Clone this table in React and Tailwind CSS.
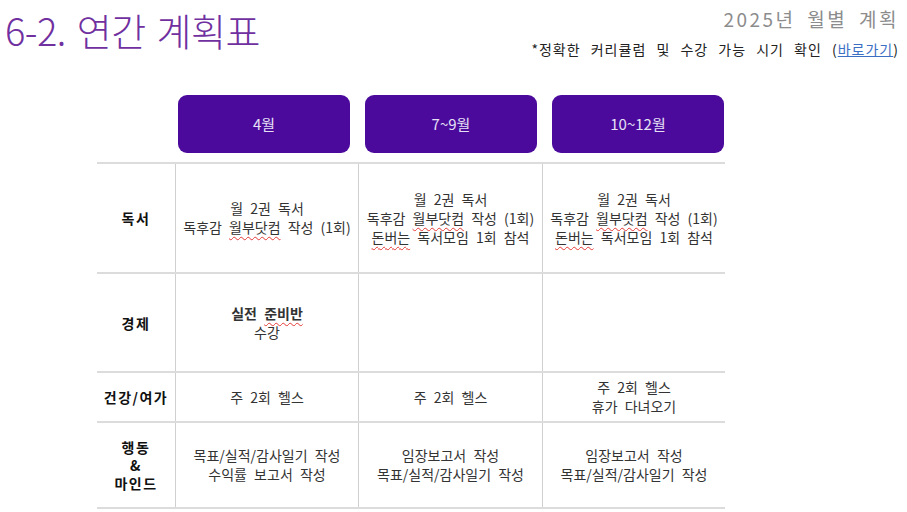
import React from "react";

const KR = { fontFamily: '"Noto Sans CJK KR", "Noto Sans", sans-serif' };

function Typo({ children }) {
  // red spell-check squiggle under a word, like in the source document
  return <span className="underline decoration-wavy decoration-[#e53935] decoration-1 underline-offset-[3px]">{children}</span>;
}

const rows = [
  {
    label: ["독서"],
    h: "h-[110px]",
    cells: [
      [<>월 2권 독서</>, <>독후감 <Typo>월부닷컴</Typo> 작성 (1회)</>],
      [<>월 2권 독서</>, <>독후감 <Typo>월부닷컴</Typo> 작성 (1회)</>, <><Typo>돈버는</Typo> 독서모임 1회 참석</>],
      [<>월 2권 독서</>, <>독후감 <Typo>월부닷컴</Typo> 작성 (1회)</>, <><Typo>돈버는</Typo> 독서모임 1회 참석</>],
    ],
  },
  {
    label: ["경제"],
    h: "h-[99px]",
    cells: [[<span className="font-bold">실전 <Typo>준비반</Typo></span>, <>수강</>], [], []],
  },
  {
    label: ["건강/여가"],
    h: "h-[50px]",
    cells: [[<>주 2회 헬스</>], [<>주 2회 헬스</>], [<>주 2회 헬스</>, <>휴가 다녀오기</>]],
  },
  {
    label: ["행동", "&", "마인드"],
    h: "h-[86px]",
    cells: [
      [<>목표/실적/감사일기 작성</>, <>수익률 보고서 작성</>],
      [<>임장보고서 작성</>, <>목표/실적/감사일기 작성</>],
      [<>임장보고서 작성</>, <>목표/실적/감사일기 작성</>],
    ],
  },
];

export default function App() {
  return (
    <div className="w-[907px] h-[512px] bg-white overflow-hidden" style={KR}>
      {/* Header */}
      <div className="flex justify-between items-start">
        <h1 className="pl-[5px] pt-[6px] text-[38px] leading-[48px] font-light text-[#7030a0] tracking-[-0.5px] [word-spacing:3px]">
          6-2. 연간 계획표
        </h1>
        <div className="pr-[8px] pt-[6px] text-right">
          <div className="text-[19px] leading-[26px] text-[#8c8c8c] tracking-[2.5px] [word-spacing:5px]">2025년 월별 계획</div>
          <div className="mt-[8px] text-[14px] leading-[18px] text-[#222] tracking-[1px] [word-spacing:6px]">
            *정확한 커리큘럼 및 수강 가능 시기 확인 (<span className="text-[#3b6fc4] underline">바로가기</span>)
          </div>
        </div>
      </div>

      {/* Month pills */}
      <div className="flex gap-[15px] pl-[178px] mt-[37px]">
        {["4월", "7~9월", "10~12월"].map((m) => (
          <div key={m} className="w-[172px] h-[58px] rounded-[9px] bg-[#4b0a9c] flex items-center justify-center text-[15px] text-[#e6e0f5]">
            {m}
          </div>
        ))}
      </div>

      {/* Table */}
      <div className="ml-[97px] mt-[9px] w-[628px] border-t-2 border-[#dcdcdc]">
        {rows.map((r, i) => (
          <div key={i} className={`grid grid-cols-[78px_183px_184px_183px] border-b-2 border-[#dcdcdc] ${r.h}`}>
            <div className="flex flex-col items-center justify-center text-[14px] leading-[18px] font-bold text-[#111] tracking-[1.5px]">
              {r.label.map((l) => (
                <span key={l}>{l}</span>
              ))}
            </div>
            {r.cells.map((c, j) => (
              <div key={j} className="border-l border-[#d0d0d0] flex flex-col items-center justify-center text-[14px] leading-[19px] text-[#333] text-center [word-spacing:4px]">
                {c.map((line, k) => (
                  <div key={k}>{line}</div>
                ))}
              </div>
            ))}
          </div>
        ))}
      </div>
    </div>
  );
}
